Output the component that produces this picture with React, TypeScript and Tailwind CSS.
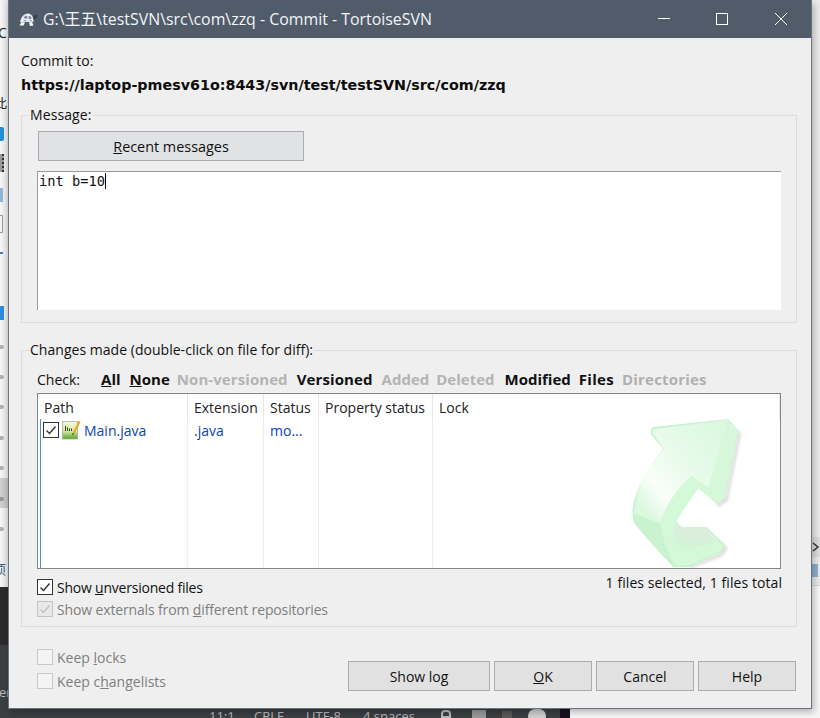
import React from "react";

const ui = { fontFamily: '"Open Sans","Noto Sans",sans-serif' };

function Box({ checked, dim, faint }: { checked?: boolean; dim?: boolean; faint?: boolean }) {
  return (
    <span
      className={`flex w-[16px] h-[16px] shrink-0 items-center justify-center border ${
        faint ? "border-[#c9c9c9] bg-[#f4f4f4]" : dim ? "border-[#c4c4c4] bg-[#e8e8e8]" : "border-[#333333] bg-white"
      }`}
    >
      {checked && (
        <svg width="14" height="14" viewBox="0 0 14 14" fill="none">
          <path d="M2.5 7.5 L5.5 10.5 L11.5 3.5" stroke={dim ? "#c2c2c2" : "#333333"} strokeWidth="1.4" />
        </svg>
      )}
    </span>
  );
}

function Btn({ w, children }: { w: string; children: React.ReactNode }) {
  return (
    <div className={`${w} h-[30px] flex items-center justify-center bg-[#e1e1e1] border border-[#adadad] text-[14px] text-[#111111]`}>
      {children}
    </div>
  );
}

function Head({ w, children }: { w: string; children?: React.ReactNode }) {
  return <div className={`${w} shrink-0 h-[25px] flex items-center pt-[2px] pl-[6px] border-r border-[#e5e5e5] text-[14px] text-[#222222] whitespace-nowrap`}>{children}</div>;
}

function Cell({ w, children }: { w: string; children?: React.ReactNode }) {
  return <div className={`${w} shrink-0 h-full pt-[1px] pl-[6px] border-r border-[#e8eefa] text-[14px] text-[#0b3fb5] whitespace-nowrap`}>{children}</div>;
}

function Turtle() {
  return (
    <svg width="19" height="15" viewBox="0 0 19 15">
      <path d="M1 10 C2 5 5 1.5 9 1.5 C12.5 1.5 14.5 5 14.5 10 Z" fill="#e8edf3" />
      <path d="M4.5 6 L6.5 3.5 L8.5 4.5 L7.5 7 Z M9.5 4 L12 4.5 L12.5 7 L9.5 7 Z M4 9 L6.5 8 L8 9.5 Z M9.5 8.5 L12.5 8 L13 9.5 Z" fill="#78889e" />
      <path d="M14 6 L15 3 L18 2.5 L18.5 5 L15.5 7.5 Z" fill="#39424f" />
      <path d="M2.5 10 L0.5 13.5 L4.5 13.5 L6 10.5 Z M10 10.5 L11 14 L14.5 13.5 L13 10 Z" fill="#f5f7fa" />
    </svg>
  );
}

function FileIcon() {
  return (
    <svg width="19" height="20" viewBox="0 0 19 20">
      <defs>
        <linearGradient id="g1" x1="0" y1="0" x2="0" y2="1">
          <stop offset="0" stopColor="#f7f7e6" />
          <stop offset="0.55" stopColor="#d8e8a0" />
          <stop offset="1" stopColor="#4fa52c" />
        </linearGradient>
      </defs>
      <rect x="0.5" y="1.5" width="15" height="17.5" fill="url(#g1)" stroke="#a8ad98" strokeWidth="0.8" />
      <path d="M3.5 6 V11 M5.5 7.5 V11 M7.5 8.5 V11 M9.5 8.5 V11" stroke="#3c3c2c" strokeWidth="1" />
      <path d="M10.5 13 L16.8 0.8 L18.6 1.8 L12.3 14 Z" fill="#e6a81e" />
      <path d="M10.5 13 L10 15.2 L12.3 14 Z" fill="#444444" />
    </svg>
  );
}

function Arrow() {
  return (
    <svg width="160" height="149" viewBox="0 0 480 447" className="absolute right-[10px] bottom-0">
      <defs>
        <linearGradient id="front" x1="0.05" y1="0.8" x2="0.85" y2="0.1">
          <stop offset="0" stopColor="#dcf8df" />
          <stop offset="0.22" stopColor="#fafefa" />
          <stop offset="0.55" stopColor="#e9fbeb" />
          <stop offset="1" stopColor="#dcf9e0" />
        </linearGradient>
        <linearGradient id="inner" x1="0.55" y1="0.5" x2="0.25" y2="1">
          <stop offset="0" stopColor="#dbeedc" />
          <stop offset="1" stopColor="#cff6d4" />
        </linearGradient>
        <filter id="soft"><feGaussianBlur stdDeviation="3" /></filter>
      </defs>
      <g transform="translate(0,-28)">
        <path d="M385 60 L394 72 L354 275 L328 292 L316 282 L346 262 Z M343 403 L354 415 L338 440 L240 478 L240 470 L328 430 Z" fill="#c9cec9" opacity="0.6" filter="url(#soft)" />
        <path
          d="M130 52 L355 28 L385 62 L346 262 Q335 285 318 280 L265 235 Q225 290 200 332 Q205 350 222 352 L290 352 L343 403 Q345 420 328 430 L240 472 L190 472 Q120 400 72 340 Q60 300 78 255 Q110 170 160 118 L124 75 Q118 60 130 52 Z"
          fill="#c9f2cf"
        />
        <path d="M355 30 L383 62 L344 258 Q335 280 318 276 L295 235 Z" fill="#d6f7da" />
        <path d="M245 198 L295 235 L318 276 L265 235 Q220 295 198 332 Q205 352 222 354 L288 354 L338 408 Q338 418 326 426 L238 466 L194 466 Q160 410 150 340 Q175 260 245 198 Z" fill="#d3f9d8" />
        <path d="M198 332 Q205 352 222 354 L288 354 L316 392 Q262 422 214 416 Q176 385 198 332 Z" fill="url(#inner)" />
        <path
          d="M134 58 L355 30 L295 235 L245 198 Q175 260 150 340 L72 312 Q85 190 162 118 L126 68 Z"
          fill="url(#front)"
        />
      </g>
    </svg>
  );
}

export default function App() {
  return (
    <div className="relative w-[820px] h-[718px] overflow-hidden flex flex-col bg-[#f7f7f7]" style={ui}>
      <div className="flex h-[709px]">
        {/* left edge of the window behind */}
        <div className="w-[8px] shrink-0 flex flex-col overflow-hidden bg-gradient-to-r from-[#f7f7f7] to-[#dedede]">
          <div className="flex-1 relative">
            <span className="absolute left-[-2px] top-[26px] text-[14px] text-[#222222] leading-none">C</span>
            <span className="absolute left-[-6px] top-[96px] text-[13px] text-[#222222] leading-none" style={{ fontFamily: '"Noto Sans CJK SC",sans-serif' }}>此</span>
            <span className="absolute left-0 top-[127px] w-[4px] h-[14px] bg-[#1f8fd8] rounded-r-[2px]" />
            <span className="absolute left-0 top-[154px] w-[4px] h-[18px] border-r-2 border-dotted border-[#333333] bg-[#999999]" />
            <span className="absolute left-0 top-[188px] w-[3px] h-[14px] bg-[#8fb4d8]" />
            <span className="absolute left-0 top-[215px] w-[3px] h-[18px] border-r border-y border-[#999999]" />
            <span className="absolute left-0 top-[252px] w-[3px] h-[2px] bg-[#3f7ec4]" />
            <span className="absolute left-0 top-[306px] w-[4px] h-[14px] bg-[#2c8be0]" />
            {[345, 375, 405, 436, 466, 497, 527].map((y) => (
              <span key={y} className="absolute left-0 h-[4px] w-[4px] bg-[#b0b0b0] rounded-r-[2px]" style={{ top: y }} />
            ))}
            <span className="absolute left-0 top-[478px] w-full h-[30px] bg-[#000000]/15" />
            <span className="absolute left-[-7px] top-[562px] text-[13px] text-[#3a5a80] leading-none" style={{ fontFamily: '"Noto Sans CJK SC",sans-serif' }}>项</span>
          </div>
          <div className="h-[58px] shrink-0 bg-[#2b2b2b]" />
          <div className="h-[64px] shrink-0 bg-[#3c3f41] text-[13px] text-[#bbbbbb] leading-none pt-[41px]">
            <span className="relative left-[-1px]">er</span>
          </div>
        </div>

        {/* dialog */}
        <div className="relative z-10 w-[804px] shrink-0 flex flex-col border-x border-b border-[#6a7480] bg-[#efefef] shadow-[2px_3px_7px_rgba(0,0,0,0.28)]">
          <div className="h-[38px] shrink-0 bg-[#515c6b] flex items-center pl-[10px] text-[#f2f4f6]">
            <Turtle />
            <span className="ml-[5px] pt-[1px] text-[15.9px] whitespace-nowrap" style={{ fontFamily: '"Open Sans","Noto Sans CJK SC",sans-serif' }}>
              G:\王五\testSVN\src\com\zzq - Commit - TortoiseSVN
            </span>
            <div className="ml-auto flex items-center">
              <svg width="14" height="14" viewBox="0 0 14 14" className="mr-[44px]"><path d="M1 6.5 H13" stroke="#ffffff" /></svg>
              <svg width="14" height="14" viewBox="0 0 14 14" className="mr-[45px]"><rect x="1.5" y="1.5" width="11" height="11" fill="none" stroke="#ffffff" /></svg>
              <svg width="14" height="14" viewBox="0 0 14 14" className="mr-[23px]"><path d="M1 1 L13 13 M13 1 L1 13" stroke="#ffffff" /></svg>
            </div>
          </div>

          <div className="flex-1 flex flex-col pl-[12px] pr-[14px] text-[#111111]">
            <div className="h-[20px] mt-[13px] text-[14px] leading-[20px]">Commit to:</div>
            <div className="h-[20px] mt-[4px] leading-[20px] font-bold whitespace-nowrap text-[#0c0c0c]" style={{ fontFamily: '"DejaVu Sans",sans-serif', fontSize: 14.3 }}>
              https://laptop-pmesv61o:8443/svn/test/testSVN/src/com/zzq
            </div>

            <fieldset className="mt-[10px] h-[218px] border border-[#dcdcdc] pl-[16px] pr-[15px] flex flex-col">
              <legend className="ml-[-9px] px-[1px] text-[14px] leading-[20px] tracking-[0.1px]">Message:</legend>
              <div className="w-[266px] h-[30px] mt-[6px] pt-[1px] flex items-center justify-center bg-[#e1e2e4] border border-[#a9adb3] text-[14.4px]">
                <span><u>R</u>ecent messages</span>
              </div>
              <div className="mt-[10px] ml-[-1px] h-[139px] bg-white border-t border-l border-[#9a9a9a] pl-[1px] pt-[1px] text-[13.7px] leading-[14px] text-[#111111]" style={{ fontFamily: '"DejaVu Sans Mono",monospace' }}>
                int b=10<span className="inline-block w-px h-[16px] align-[-3px] bg-black" />
              </div>
            </fieldset>

            <fieldset className="mt-[17px] h-[287px] border border-[#dcdcdc] pl-[15px] pr-[15px] flex flex-col">
              <legend className="ml-[-8px] px-[1px] text-[14px] leading-[20px] tracking-[0.03px]">Changes made (double-click on file for diff):</legend>
              <div className="h-[20px] mt-[9px] flex items-center text-[15px] whitespace-nowrap">
                <span className="text-[14px]">Check:</span>
                <span className="ml-[21px] font-bold"><u>A</u>ll</span>
                <span className="ml-[9px] font-bold"><u>N</u>one</span>
                <span className="ml-[7px] font-bold text-[#b4b4b4] tracking-[0.08px]">Non-versioned</span>
                <span className="ml-[9px] font-bold tracking-[0.1px]">Versioned</span>
                <span className="ml-[9px] font-bold text-[#b4b4b4]">Added</span>
                <span className="ml-[7px] font-bold text-[#b4b4b4]">Deleted</span>
                <span className="ml-[10px] font-bold">Modified</span>
                <span className="ml-[8px] font-bold tracking-[0.3px]">Files</span>
                <span className="ml-[8px] font-bold text-[#b0b0b0] tracking-[0.2px]">Directories</span>
              </div>
              <div className="relative mt-[4px] h-[176px] border border-[#82878f] bg-white flex flex-col overflow-hidden">
                <div className="flex h-[25px] shrink-0">
                  <Head w="w-[150px]">Path</Head>
                  <Head w="w-[76px]">Extension</Head>
                  <Head w="w-[55px]">Status</Head>
                  <Head w="w-[114px]">Property status</Head>
                  <div className="flex-1 pl-[6px] pt-[2px] h-[25px] flex items-center border-r border-[#e5e5e5] text-[14px] text-[#222222]">Lock</div>
                </div>
                <div className="flex flex-1 min-h-0">
                  <div className="w-[150px] shrink-0 h-full border-r border-[#e8eefa] flex">
                    <div className="ml-[2px] w-px h-full bg-[#4a90e2]" />
                    <div className="ml-[2px] pt-[1px] flex items-start gap-[3px]">
                      <div className="mt-[2px]"><Box checked /></div>
                      <FileIcon />
                      <span className="text-[14px] text-[#0b3fb5]">Main.java</span>
                    </div>
                  </div>
                  <Cell w="w-[76px]">.java</Cell>
                  <Cell w="w-[55px]">mo...</Cell>
                  <Cell w="w-[114px]" />
                  <div className="flex-1" />
                </div>
                <Arrow />
              </div>
              <div className="flex justify-between h-[20px] mt-[7px]">
                <div className="flex items-center gap-[4px] text-[14px] h-[22px] tracking-[-0.22px]">
                  <Box checked />
                  <span>Show <u>u</u>nversioned files</span>
                </div>
                <div className="text-[14px] leading-[18px] -mt-[2px] mr-[-1px] tracking-[0.07px]">1 files selected, 1 files total</div>
              </div>
              <div className="flex items-center gap-[4px] text-[14px] h-[22px] mt-[2px] text-[#7e7e7e] tracking-[-0.14px]">
                <Box checked dim />
                <span>Show externals from <u>d</u>ifferent repositories</span>
              </div>
            </fieldset>

            <div className="flex-1 flex items-start pl-[16px] pr-[1px]">
              <div className="flex flex-col mt-[19px] gap-[2px] text-[14px] text-[#7e7e7e]">
                <div className="flex items-center gap-[4px] h-[22px]"><Box faint /><span>Keep <u>l</u>ocks</span></div>
                <div className="flex items-center gap-[4px] h-[22px]"><Box faint /><span>Keep c<u>h</u>angelists</span></div>
              </div>
              <div className="ml-auto mt-[34px] flex gap-[4px]">
                <Btn w="w-[142px]">Show log</Btn>
                <Btn w="w-[98px]"><span><u>O</u>K</span></Btn>
                <Btn w="w-[98px]">Cancel</Btn>
                <Btn w="w-[98px]">Help</Btn>
              </div>
            </div>
          </div>
        </div>

        {/* right edge of the window behind */}
        <div className="flex-1 flex flex-col">
          <div className="h-[586px] flex flex-col bg-[#ececec] border-b border-[#d8d8d8]">
            <div className="h-[537px]" />
            <div className="h-[20px] bg-[#dedede] flex items-center justify-center">
              <svg width="8" height="10" viewBox="0 0 8 10"><path d="M1 1 L6 5 L1 9" fill="none" stroke="#333333" strokeWidth="1.5" /></svg>
            </div>
            <div className="h-[7px]" />
            <div className="w-[6px] h-[13px] bg-[#8fb0d2]" />
          </div>
        </div>
      </div>

      {/* status bar of the window behind */}
      <div className="h-[9px] shrink-0 flex overflow-hidden">
        <div className="w-[570px] bg-[#3c3f41] relative text-[13px] text-[#bbbbbb] leading-none">
          <span className="absolute left-[209px] top-[1px]">11:1</span>
          <span className="absolute left-[254px] top-[1px]">CRLF</span>
          <span className="absolute left-[306px] top-[1px]">UTF-8</span>
          <span className="absolute left-[363px] top-[1px]">4 spaces</span>
          <span className="absolute left-[441px] top-[1px] w-[10px] h-[8px] border-2 border-[#bbbbbb] rounded-t-[4px]" />
          <span className="absolute left-[472px] top-[1px] w-[14px] h-[8px] bg-[#9a9a9a]" />
          <span className="absolute left-[502px] top-[2px] w-[10px] h-[7px] bg-[#5a5a5a]" />
          <span className="absolute left-[528px] top-0 w-[18px] h-[14px] rounded-full bg-[#d0d0d0]" />
          <span className="absolute left-[560px] top-0 w-[10px] h-[9px] bg-[#1a0f1f]" />
        </div>
        <div className="flex-1 bg-[#f7f7f7]" />
      </div>
    </div>
  );
}
